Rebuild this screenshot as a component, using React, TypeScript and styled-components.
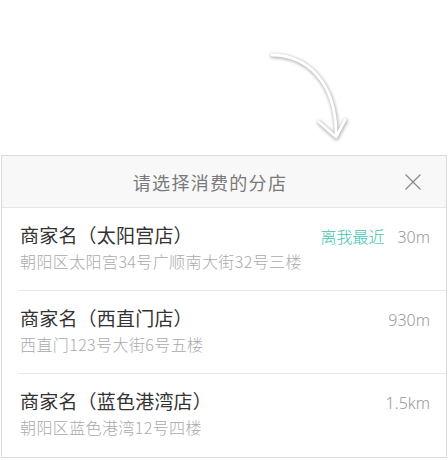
import React from "react";
import styled, { createGlobalStyle } from "styled-components";

const Global = createGlobalStyle`
  html, body { margin: 0; padding: 0; background: #fff; }
  body { font-family: "Noto Sans CJK SC", "Noto Sans", sans-serif; }
`;

const Page = styled.div`
  width: 448px;
  height: 460px;
  overflow: hidden;
  display: flex;
  flex-direction: column;
`;

const ArrowArea = styled.div`
  height: 155px;
  flex: none;
`;

const Panel = styled.section`
  margin-left: 1px;
  width: 444px;
  border: 1px solid #dcdcdc;
  background: #fff;
  display: flex;
  flex-direction: column;
`;

const Header = styled.header`
  height: 51px;
  background: #f8f8f8;
  border-bottom: 1px solid #e6e6e6;
  display: flex;
  align-items: center;
  justify-content: center;
  padding-right: 28px;
  position: relative;
`;

const HeaderTitle = styled.h1`
  margin: 0;
  font-size: 18px;
  font-weight: 400;
  letter-spacing: 1.3px;
  color: #7a7a7a;
`;

const CloseButton = styled.button`
  position: absolute;
  right: 24px;
  top: 17px;
  width: 18px;
  height: 18px;
  padding: 0;
  border: 0;
  background: none;
  display: flex;
`;

const Row = styled.div<{ $last?: boolean }>`
  height: 83px;
  margin-left: 17px;
  box-sizing: border-box;
  border-bottom: ${(p) => (p.$last ? "none" : "1px solid #e6e6e6")};
  display: flex;
  flex-direction: column;
  padding: 13px 16px 0 1px;
`;

const TopLine = styled.div`
  display: flex;
  align-items: baseline;
`;

const Name = styled.div`
  flex: 1;
  font-size: 19px;
  font-weight: 400;
  color: #333;
  letter-spacing: 0.2px;
`;

const Nearest = styled.span`
  font-size: 16px;
  color: #3cc4b0;
  margin-right: 13px;
  font-weight: 300;
`;

const Distance = styled.span`
  font-size: 16px;
  color: #999;
  font-weight: 300;
  font-family: "Noto Sans", "Noto Sans CJK SC", sans-serif;
`;

const Address = styled.div`
  margin-top: 1px;
  font-size: 16px;
  color: #aaa;
  font-weight: 300;
  letter-spacing: 0.4px;
`;

const shops = [
  { name: "商家名（太阳宫店）", addr: "朝阳区太阳宫34号广顺南大街32号三楼", dist: "30m", nearest: true },
  { name: "商家名（西直门店）", addr: "西直门123号大街6号五楼", dist: "930m" },
  { name: "商家名（蓝色港湾店）", addr: "朝阳区蓝色港湾12号四楼", dist: "1.5km" },
];

export default function App() {
  return (
    <Page>
      <Global />
      <ArrowArea>
        <svg width="448" height="155" viewBox="0 0 448 155">
          <defs>
            <filter id="sh" x="-20%" y="-20%" width="140%" height="140%">
              <feGaussianBlur stdDeviation="1.5" />
            </filter>
          </defs>
          <g fill="none" strokeLinecap="round" strokeLinejoin="round">
            <g stroke="#b8b8b8" strokeWidth="4.5" filter="url(#sh)" transform="translate(0.5,1)">
              <path d="M272 55 C 305 55, 336 80, 336 134" />
              <path d="M319 122 L336 137 L345 120" />
            </g>
            <g stroke="#fff" strokeWidth="2.8">
              <path d="M272 55 C 305 55, 336 80, 336 134" />
              <path d="M319 122 L336 137 L345 120" />
            </g>
          </g>
        </svg>
      </ArrowArea>
      <Panel>
        <Header>
          <HeaderTitle>请选择消费的分店</HeaderTitle>
          <CloseButton aria-label="关闭">
            <svg width="18" height="18" viewBox="0 0 18 18">
              <path d="M1.5 1.5 L16.5 16.5 M16.5 1.5 L1.5 16.5" stroke="#888" strokeWidth="1.2" />
            </svg>
          </CloseButton>
        </Header>
        {shops.map((s, i) => (
          <Row key={s.name} $last={i === shops.length - 1}>
            <TopLine>
              <Name>{s.name}</Name>
              {s.nearest && <Nearest>离我最近</Nearest>}
              <Distance>{s.dist}</Distance>
            </TopLine>
            <Address>{s.addr}</Address>
          </Row>
        ))}
      </Panel>
    </Page>
  );
}
